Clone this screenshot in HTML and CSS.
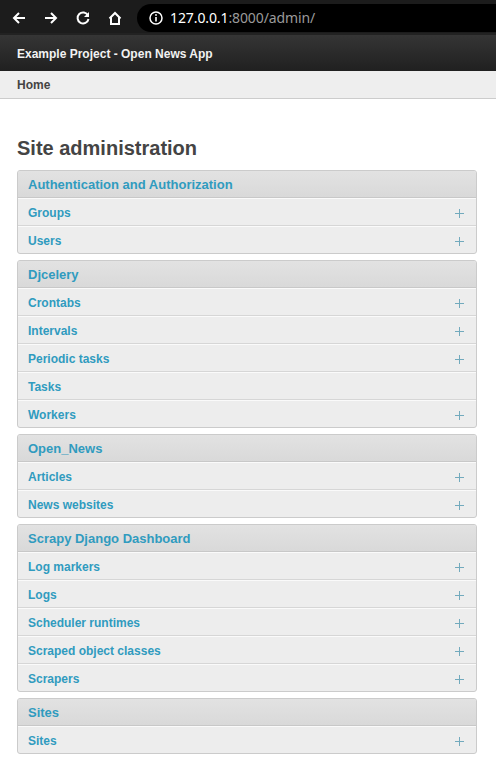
FILE: index.html
```html
<!DOCTYPE html>
<html>
<head>
<meta charset="utf-8">
<link rel="stylesheet" href="styles.css">
</head>
<body>
<div class="chrome">
  <div class="nav">
    <svg class="ic" width="16" height="16" viewBox="0 0 16 16"><path d="M14 8H3M8 3L3 8l5 5" fill="none" stroke="#fff" stroke-width="2"/></svg>
    <svg class="ic" width="16" height="16" viewBox="0 0 16 16"><path d="M2 8h11M8 3l5 5-5 5" fill="none" stroke="#fff" stroke-width="2"/></svg>
    <svg class="ic" width="16" height="16" viewBox="0 0 16 16"><path d="M13 5.5A5.5 5.5 0 1 0 13.5 9" fill="none" stroke="#fff" stroke-width="2"/><path d="M14 2v5H9z" fill="#fff"/></svg>
    <svg class="ic" width="16" height="16" viewBox="0 0 16 16"><path d="M2.5 8.5L8 3l5.5 5.5M4 7.5V14h8V7.5" fill="none" stroke="#fff" stroke-width="2"/></svg>
  </div>
  <div class="url">
    <svg width="14" height="14" viewBox="0 0 14 14"><circle cx="7" cy="7" r="6" fill="none" stroke="#fff" stroke-width="1.5"/><path d="M7 6v4.5" stroke="#fff" stroke-width="1.6"/><circle cx="7" cy="4" r="0.9" fill="#fff"/></svg>
    <span class="host">127.0.0.1</span><span class="rest">:8000/admin/</span>
  </div>
</div>
<div class="header">Example Project - Open News App</div>
<div class="breadcrumbs">Home</div>
<div class="content">
  <h1>Site administration</h1>
  <div class="module">
    <div class="caption">Authentication and Authorization</div>
    <div class="row"><span>Groups</span><i class="plus"></i></div>
    <div class="row"><span>Users</span><i class="plus"></i></div>
  </div>
  <div class="module">
    <div class="caption">Djcelery</div>
    <div class="row"><span>Crontabs</span><i class="plus"></i></div>
    <div class="row"><span>Intervals</span><i class="plus"></i></div>
    <div class="row"><span>Periodic tasks</span><i class="plus"></i></div>
    <div class="row"><span>Tasks</span></div>
    <div class="row"><span>Workers</span><i class="plus"></i></div>
  </div>
  <div class="module">
    <div class="caption">Open_News</div>
    <div class="row"><span>Articles</span><i class="plus"></i></div>
    <div class="row"><span>News websites</span><i class="plus"></i></div>
  </div>
  <div class="module">
    <div class="caption">Scrapy Django Dashboard</div>
    <div class="row"><span>Log markers</span><i class="plus"></i></div>
    <div class="row"><span>Logs</span><i class="plus"></i></div>
    <div class="row"><span>Scheduler runtimes</span><i class="plus"></i></div>
    <div class="row"><span>Scraped object classes</span><i class="plus"></i></div>
    <div class="row"><span>Scrapers</span><i class="plus"></i></div>
  </div>
  <div class="module">
    <div class="caption">Sites</div>
    <div class="row"><span>Sites</span><i class="plus"></i></div>
  </div>
</div>
</body>
</html>
```
FILE: styles.css
```css
html, body { margin: 0; padding: 0; background: #fff; }
body { font-family: "Liberation Sans", Arial, sans-serif; }

.chrome {
  height: 35px;
  background: #1c1c1c;
  display: flex;
  align-items: center;
  box-shadow: inset 0 -2px 0 #222;
}
.nav { display: flex; gap: 16px; padding-left: 11px; align-items: center; }
.ic { display: block; }
.url {
  margin-left: 14px;
  flex: 1;
  height: 28px;
  background: #000;
  border-radius: 14px 0 0 14px;
  display: flex;
  align-items: center;
  padding-left: 12px;
  font-family: "Noto Sans", "DejaVu Sans", sans-serif;
  font-size: 14px;
  letter-spacing: -0.1px;
}
.url svg { margin-right: 7px; }
.host { color: #fff; }
.rest { color: #9a9a9a; }

.header {
  height: 36px;
  box-sizing: border-box;
  padding-top: 1px;
  background: linear-gradient(#353535, #202020);
  color: #f2f2f2;
  font-weight: bold;
  font-size: 12px;
  line-height: 36px;
  padding-left: 17px;
}
.breadcrumbs {
  box-sizing: border-box;
  padding-top: 1px;
  line-height: 27px;
  background: #eee;
  border-bottom: 1px solid #ccc;
  height: 28px;
  color: #444;
  font-weight: bold;
  font-size: 12px;
  padding-left: 17px;
}
.content { padding: 0 19px 0 17px; }
h1 {
  margin: 38px 0 10px;
  font-size: 20px;
  line-height: 23px;
  color: #444;
}
.module {
  border: 1px solid #cbcbcb;
  border-radius: 3px;
  margin-bottom: 6px;
  background: #ededed;
  overflow: hidden;
}
.caption {
  height: 26px;
  line-height: 27px;
  background: linear-gradient(#e2e2e2, #d9d9d9);
  border-bottom: 1px solid #c8c8c8;
  color: #309bbf;
  font-weight: bold;
  font-size: 13px;
  padding-left: 10px;
}
.row {
  border-top: 1px solid #fafafa;
  border-bottom: 1px solid #d6d6d6;
  box-sizing: border-box;
  height: 28px;
  display: flex;
  align-items: center;
  justify-content: space-between;
  padding: 2px 12px 0 10px;
  font-size: 12px;
  font-weight: bold;
  color: #309bbf;
}
.row:last-child { border-bottom: 0; height: 27px; }
.plus {
  position: relative;
  width: 9px;
  height: 9px;
  margin-top: 1px;
}
.plus::before, .plus::after {
  content: "";
  position: absolute;
  background: #72aabd;
}
.plus::before { left: 0; right: 0; top: 4px; height: 1px; }
.plus::after { top: 0; bottom: 0; left: 4px; width: 1px; }
```
